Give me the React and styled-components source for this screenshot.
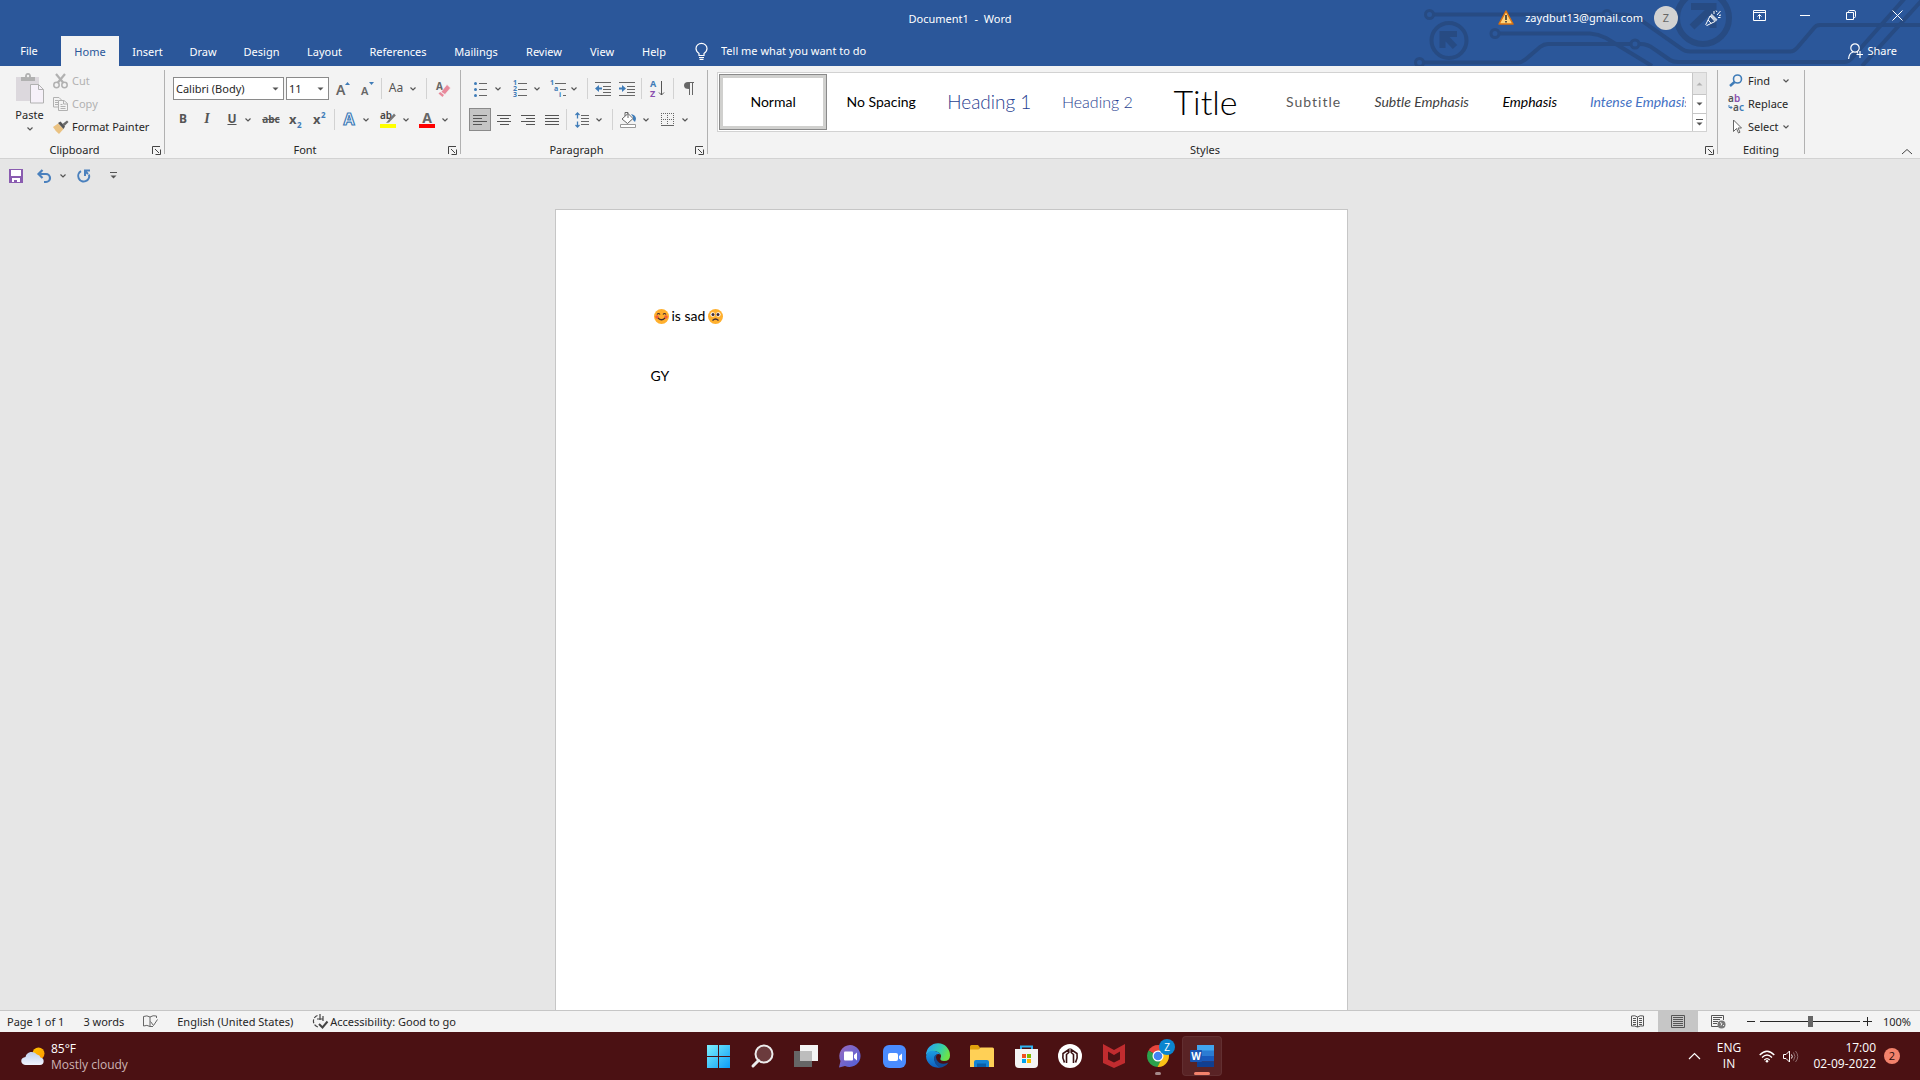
import React, { useState } from 'react';
import styled, { createGlobalStyle } from 'styled-components';

const GlobalStyle = createGlobalStyle`
  * {
    box-sizing: border-box;
  }
  body {
    margin: 0;
    font-family: "Noto Sans", "Open Sans", sans-serif;
    font-size: 11px;
    line-height: 16px;
    color: #262626;
  }
  button, input, select {
    font: inherit;
    color: inherit;
    margin: 0;
    padding: 0;
    border: 0;
    background: none;
  }
  svg {
    display: block;
    flex: none;
    overflow: visible;
  }
`

const Window = styled.div`
  display: flex;
  flex-direction: column;
  height: 100vh;
  background-color: #e6e6e6;
  overflow: hidden;
`

/* ---------- header ---------- */

const Header = styled.header`
  position: relative;
  flex: none;
  background-color: #2b579a;
  color: #fff;
`

const Circuit = styled.svg`
  position: absolute;
  top: 0;
  right: 0;
  overflow: hidden;
`

const TitleBar = styled.div`
  position: relative;
  display: grid;
  grid-template-columns: 1fr auto 1fr;
  height: 36px;
`

const DocTitle = styled.h1`
  grid-column: 2;
  margin: 0;
  padding-top: 11px;
  font-size: 11px;
  font-weight: 400;
  line-height: 16px;
  white-space: pre;
`

const Account = styled.div`
  display: flex;
  justify-content: flex-end;
`

const User = styled.button`
  display: flex;
  align-items: center;
  gap: 11px;
  height: 35px;
  margin-right: 12px;
`

const Avatar = styled.span`
  width: 24px;
  height: 24px;
  border-radius: 50%;
  background-color: #d2d2d2;
  color: #666;
  line-height: 24px;
  text-align: center;
`

const WindowButton = styled.button`
  display: flex;
  align-items: center;
  justify-content: center;
  width: 46px;
  height: ${({ $tall }) => ($tall ? '34px' : '30px')};
  &:hover {
    background-color: #3e6db5;
  }
`

const TabBar = styled.nav`
  position: relative;
  display: flex;
  align-items: center;
  height: 30px;
`

const Tab = styled.button`
  width: ${({ $w }) => $w}px;
  height: 30px;
  padding-top: ${({ $file }) => ($file ? 0 : 2)}px;
  padding-right: ${({ $file }) => ($file ? 3 : 0)}px;
  background-color: ${({ $active }) => ($active ? '#f3f3f3' : 'transparent')};
  color: ${({ $active }) => ($active ? '#2b579a' : '#fff')};
`

const TellMe = styled.label`
  display: flex;
  align-items: center;
  gap: 13px;
  margin-left: 15px;
  input {
    width: 200px;
    outline: none;
  }
  input::placeholder {
    color: #fff;
    opacity: 1;
  }
`

const Share = styled.button`
  display: flex;
  align-items: center;
  gap: 4px;
  margin-left: auto;
  margin-right: 23px;
`

/* ---------- ribbon ---------- */

const Ribbon = styled.section`
  display: flex;
  flex: none;
  height: 93px;
  background-color: #f3f3f3;
  border-bottom: 1px solid #d2d2d2;
`

const Divider = styled.div`
  width: 1px;
  margin: 4px 0;
  background-color: #b1b1b1;
`

const Group = styled.div`
  display: flex;
  flex-direction: column;
  flex: ${({ $w }) => ($w ? `0 0 ${$w}px` : '1 1 0')};
  min-width: 0;
`

const GroupBody = styled.div`
  flex: 1;
  display: flex;
  min-height: 0;
`

const GroupFooter = styled.div`
  display: flex;
  height: 16px;
  span {
    flex: 1;
    text-align: center;
  }
`

const Launcher = styled.button`
  display: flex;
  align-items: center;
  justify-content: center;
  width: 15px;
`

const PasteButton = styled.button`
  display: flex;
  flex-direction: column;
  align-items: center;
  gap: 3px;
  width: 53px;
  padding: 7px 0 0 6px;
`

const Stack = styled.div`
  display: flex;
  flex-direction: column;
  padding-top: 3px;
  padding-left: ${({ $left }) => $left || 0}px;
`

const StackButton = styled.button`
  display: grid;
  grid-template-columns: 16px minmax(31px, auto) auto;
  align-items: center;
  justify-content: start;
  gap: 3px;
  height: 23px;
  text-align: left;
  white-space: nowrap;
  color: ${({ disabled }) => (disabled ? '#b1b1b1' : '#262626')};
`

const ToolRows = styled.div`
  display: flex;
  flex-direction: column;
  gap: 8px;
  padding: 11px 0 0 ${({ $left }) => $left}px;
`

const ToolRow = styled.div`
  display: flex;
  align-items: center;
  height: 23px;
`

const Sep = styled.div`
  width: 1px;
  height: 21px;
  margin: 0 2px;
  background-color: #d2d2d2;
`

const Tool = styled.button`
  display: flex;
  align-items: center;
  justify-content: center;
  width: ${({ $w }) => $w}px;
  height: 23px;
  color: #555;
  &:hover {
    background-color: #d5d5d5;
  }
`

const ChevButton = styled(Tool)`
  justify-content: flex-start;
  padding-left: 1px;
`

const AlignGroup = styled.div`
  display: flex;
  gap: 2px;
  padding: 0 1px;
`

const AlignButton = styled(Tool)`
  width: 22px;
  border: 1px solid ${({ $on }) => ($on ? '#8a8a8a' : 'transparent')};
  background-color: ${({ $on }) => ($on ? '#c5c5c5' : 'transparent')};
`

const Combo = styled.div`
  display: grid;
  width: ${({ $w }) => $w}px;
  height: 23px;
  margin-right: ${({ $gap }) => $gap || 0}px;
  border: 1px solid #8a8a8a;
  background-color: #fff;
  align-items: center;
  select, svg {
    grid-area: 1 / 1;
  }
  select {
    appearance: none;
    width: 100%;
    height: 21px;
    padding-left: 2px;
    outline: none;
  }
  svg {
    justify-self: end;
    margin-right: 4px;
    pointer-events: none;
  }
`

const Glyph = styled.span`
  font-size: ${({ $size }) => $size || 14}px;
  line-height: 14px;
  padding-bottom: 2px;
  font-weight: ${({ $bold }) => ($bold ? 700 : 400)};
  font-style: ${({ $italic }) => ($italic ? 'italic' : 'normal')};
  font-family: ${({ $serif }) => ($serif ? '"Liberation Serif", serif' : 'inherit')};
  text-decoration: ${({ $line }) => $line || 'none'};
`

/* ---------- style gallery ---------- */

const Gallery = styled.div`
  flex: 1;
  display: flex;
  height: 60px;
  margin: 6px 10px 0 9px;
  border: 1px solid #d2d2d2;
  background-color: #fff;
  min-width: 0;
`

const GalleryItems = styled.div`
  flex: 1;
  display: flex;
  padding: 1px 0 1px 1px;
  min-width: 0;
`

const StyleCard = styled.button`
  flex: 1 1 0;
  min-width: 0;
  padding: 0 5px;
  border: 1px solid ${({ $on }) => ($on ? '#8a8a8a' : 'transparent')};
  box-shadow: ${({ $on }) => ($on ? 'inset 0 0 0 3px #d0d0ce' : 'none')};
  span {
    display: block;
    overflow: hidden;
    white-space: nowrap;
    text-align: center;
    font-family: Lato, "Open Sans", sans-serif;
    font-size: ${({ $size }) => $size || 14}px;
    font-weight: ${({ $light }) => ($light ? 300 : 400)};
    font-style: ${({ $italic }) => ($italic ? 'italic' : 'normal')};
    letter-spacing: ${({ $spaced }) => ($spaced ? '1px' : 'normal')};
    line-height: 44px;
    color: ${({ $color }) => $color || '#000'};
  }
`

const GalleryScroll = styled.div`
  display: grid;
  grid-template-rows: 21px 19px 18px;
  width: 14px;
  border-left: 1px solid #c6c6c6;
`

const ScrollButton = styled.button`
  display: flex;
  align-items: center;
  justify-content: center;
  background-color: ${({ disabled }) => (disabled ? '#e6e6e6' : '#fff')};
  & + & {
    border-top: 1px solid #c6c6c6;
  }
`

const RibbonEnd = styled.div`
  flex: 0 0 115px;
  display: flex;
  align-items: flex-end;
  justify-content: flex-end;
  padding: 0 7px 3px 0;
`

/* ---------- quick access and document ---------- */

const QuickAccess = styled.div`
  display: flex;
  align-items: center;
  flex: none;
  height: 33px;
  padding-left: 2px;
`

const Workspace = styled.main`
  flex: 1;
  min-height: 0;
  display: flex;
  justify-content: center;
  padding: 17px 18px 0 0;
  overflow: hidden;
`

const Page = styled.article`
  width: 793px;
  height: 1123px;
  padding: 96px 95px;
  border: 1px solid #c6c6c6;
  background-color: #fff;
  color: #000;
  font-family: Lato, "Open Sans", sans-serif;
  font-size: 14px;
  line-height: 20px;
`

const Line = styled.p`
  display: flex;
  align-items: center;
  gap: 3px;
  height: 20px;
  margin: 0 0 40px;
  padding-left: ${({ $indent }) => ($indent ? 3 : 0)}px;
`

/* ---------- status bar ---------- */

const StatusBar = styled.footer`
  display: flex;
  justify-content: space-between;
  flex: none;
  height: 22px;
  padding-left: 7px;
  border-top: 1px solid #c6c6c6;
  background-color: #f3f3f3;
`

const StatusGroup = styled.div`
  display: flex;
  gap: 19px;
`

const StatusItem = styled.button`
  display: flex;
  align-items: center;
  gap: 1px;
  white-space: nowrap;
`

const ViewGroup = styled.div`
  display: flex;
`

const ViewButton = styled.button`
  display: flex;
  align-items: center;
  justify-content: center;
  width: 40px;
  height: 21px;
  background-color: ${({ $on }) => ($on ? '#c6c6c6' : 'transparent')};
`

const ZoomArea = styled.div`
  display: flex;
  align-items: center;
  margin-left: 6px;
`

const ZoomButton = styled.button`
  display: flex;
  align-items: center;
  justify-content: center;
  width: 14px;
  height: 21px;
`

const ZoomSlider = styled.input`
  appearance: none;
  width: 100px;
  height: 11px;
  margin-left: 2px;
  outline: none;
  &::-webkit-slider-runnable-track {
    height: 1px;
    background-color: #262626;
  }
  &::-webkit-slider-thumb {
    appearance: none;
    width: 5px;
    height: 11px;
    margin-top: -5px;
    background-color: #666;
  }
`

const ZoomValue = styled.button`
  width: 46px;
  text-align: center;
`

/* ---------- taskbar ---------- */

const TaskBar = styled.div`
  display: grid;
  grid-template-columns: 1fr auto 1fr;
  align-items: center;
  flex: none;
  height: 48px;
  background-color: #4b1113;
  color: #fff;
  font-family: "Open Sans", "Noto Sans", sans-serif;
  font-size: 12px;
`

const Weather = styled.button`
  display: flex;
  align-items: center;
  gap: 6px;
  padding: 2px 0 0 21px;
  text-align: left;
  span {
    display: block;
  }
  span + span {
    color: #cdb4b5;
  }
`

const Apps = styled.div`
  display: flex;
  gap: 4px;
`

const AppButton = styled.button`
  display: grid;
  place-items: center;
  position: relative;
  width: 40px;
  height: 40px;
  border-radius: 4px;
  background-color: ${({ $active }) => ($active ? 'rgba(255, 255, 255, 0.08)' : 'transparent')};
  box-shadow: ${({ $active }) => ($active ? 'inset 0 0 0 1px rgba(255, 255, 255, 0.06)' : 'none')};
  &::after {
    content: "";
    position: absolute;
    bottom: 1px;
    height: 3px;
    border-radius: 2px;
    width: ${({ $active, $running }) => ($active ? 16 : $running ? 6 : 0)}px;
    background-color: ${({ $active }) => ($active ? '#f3826c' : '#a58889')};
  }
`

const ProfileBadge = styled.span`
  position: absolute;
  top: 3px;
  right: 3px;
  width: 16px;
  height: 16px;
  border-radius: 50%;
  background-color: #0b85cf;
  font-size: 10px;
  line-height: 16px;
`

const Tray = styled.div`
  display: flex;
  align-items: center;
  justify-content: flex-end;
  padding-right: 20px;
`

const TrayButton = styled.button`
  display: flex;
  align-items: center;
  justify-content: center;
  gap: 8px;
  width: ${({ $w }) => $w}px;
  height: 40px;
`

const Clock = styled.button`
  width: 70px;
  margin-right: 8px;
  text-align: right;
  white-space: nowrap;
`

const Notice = styled.button`
  width: 16px;
  height: 16px;
  border-radius: 50%;
  background-color: #f3826c;
  color: #2a0a0b;
  font-size: 11px;
  line-height: 16px;
`

/* ---------- icons ---------- */

const Chev = () => (
  <svg width="8" height="6" fill="none" stroke="#555" strokeWidth="1.2"><path d="M1.5 1.5 4 4l2.5-2.5" /></svg>
)

const Triangle = ({ up, bar, color = '#555' }) => (
  <svg width="7" height="8" fill={color}>
    {bar && <path d="M0 0h7v1H0z" />}
    <path d={up ? 'M.5 5.5h6l-3-3z' : bar ? 'M.5 3.5h6l-3 3z' : 'M.5 2.5h6l-3 3z'} />
  </svg>
)

const LauncherIcon = () => (
  <svg width="9" height="9" fill="none" stroke="#444"><path d="M.5 8V.5H8M3 3l4 4M8.5 3.5v5h-5" /></svg>
)

const CircuitArt = () => (
  <Circuit width="520" height="66" viewBox="0 0 520 66" fill="none" stroke="#274b83" strokeWidth="4" aria-hidden="true">
    <path d="M34 14.500H202M212 14.500H224Q234 15 242 21L282 49Q285 51.500 290 51.500H390Q394 51.500 397 48L414 28Q416 25 420 25H520" />
    <path d="M100 33.500H190Q198 34 206 38L252 66M24 62.500H118Q122 62.500 126 59L140 47Q144 44 148 44H230M240 44Q248 44 254 49L270 60Q273 62 278 62H444Q449 62 452 58L505 -2M462 66 524 -2" />
    <g strokeWidth="3"><circle cx="29.5" cy="14.5" r="4" /><circle cx="207" cy="14.5" r="4" /><circle cx="95" cy="33.5" r="4" /><circle cx="235" cy="44" r="4" /><circle cx="19.5" cy="62.5" r="4" /></g>
    <circle cx="49" cy="40.5" r="17.5" />
    <path d="M42.500 48V34H57M43 34.500 55 47" strokeWidth="6" />
    <circle cx="303" cy="18" r="26" strokeWidth="6" />
    <path d="M291 6.500H313V28M312 8 292 27" strokeWidth="7" />
  </Circuit>
)

const WarningIcon = () => (
  <svg width="16" height="15" viewBox="0 0 16 15"><path d="M8 1 15 14H1z" fill="#ffd37a" stroke="#d9710f" strokeWidth="1.5" strokeLinejoin="round" /><path d="M7.200 5h1.600v5H7.200zM7.200 11h1.600v1.600H7.200z" fill="#333" /></svg>
)

const PartyIcon = () => (
  <svg width="17" height="17" fill="none" stroke="#fff"><path d="M5 7 .8 15.500 1.800 16.500 10 12.500zM3.200 11l3 3.500" /><path d="M6.500 4.500 12.500 10.500 11 12.500 5 7z" fill="#fff" stroke="none" opacity=".75" /><path d="M9 5V2M11 1.500l1 1.500M12 6l3.500-4M14 6.500l2-.5M13 8.500h2.500" /></svg>
)

const RibbonDisplayIcon = () => (
  <svg width="13" height="11" fill="none" stroke="#fff"><path d="M.5.5h12v10H.5zM.5 2.500h12M6.500 9V4.500M4.500 6.500l2-2 2 2" /></svg>
)

const MinimizeIcon = () => <svg width="10" height="1"><path d="M0 0h10v1H0z" fill="#fff" /></svg>

const RestoreIcon = () => (
  <svg width="10" height="10" fill="none" stroke="#fff"><path d="M.5 2.500h7v7h-7zM2.500 2V1.500q0-1 1-1H8Q9.500.5 9.500 2V6.500q0 1-1 1H8" /></svg>
)

const CloseIcon = () => <svg width="11" height="11" stroke="#fff"><path d="M.5.5l10 10M10.500.5l-10 10" /></svg>

const BulbIcon = () => (
  <svg width="13" height="17" fill="none" stroke="#fff" strokeWidth="1.2"><path d="M4 12.500V10.500Q1 8.500 1 5.500A5.300 5 0 0 1 12 5.500Q12 8.500 9 10.500V12.500zM4 14.500h5M4.500 16.300h4" /></svg>
)

const ShareIcon = () => (
  <svg width="15" height="16" fill="none" stroke="#fff" strokeWidth="1.2"><circle cx="7" cy="5" r="4.2" /><path d="M.6 16Q1 10 5 9M9 9l1 1.500M12 8v7M8.500 11.500h6.500" /></svg>
)

const PasteIcon = () => (
  <svg width="29" height="31"><path d="M1 4h23v24H1z" fill="#dcd8dd" /><path d="M6 4h4q0-4 3-4t3 4h4v4H6z" fill="#b1b1b1" /><circle cx="13" cy="3" r="1.2" fill="#f3f3f3" /><path d="M15.500 11.500h8l5 5v13.500h-13z" fill="#f6f1f9" stroke="#b1b1b1" /><path d="M23.500 11.500v5h5" fill="none" stroke="#b1b1b1" /></svg>
)

const CutIcon = () => (
  <svg width="15" height="16" fill="none" stroke="#b1b1b1" strokeWidth="1.5"><circle cx="3.5" cy="12" r="2.7" /><circle cx="11.5" cy="12" r="2.7" /><path d="M3 1l7.500 9M12 1 4.500 10" strokeWidth="2.2" /></svg>
)

const CopyIcon = () => (
  <svg width="15" height="14" fill="#f3f3f3" stroke="#b1b1b1"><path d="M.5.5H6L8.500 3v7H.5zM2 3.500h3M2 5.500h3M2 7.500h3" /><path d="M5.500 3.500H11l3.500 3V13.500h-9zM10.500 3.500v3.500h4M7.500 7.500h2M7.500 9.500h5M7.500 11.500h5" /></svg>
)

const PainterIcon = () => (
  <svg width="16" height="14"><path d="M0 7 5 3.500 10.500 9 6 14Q3 12 0 7z" fill="#eac282" /><path d="M5 3 7.500 1.500 12 6.500 10.500 9z" fill="#555" /><path d="M9.500 4 14 .5 15.500 2 11.500 6z" fill="#6a6a6a" /></svg>
)

const SizeIcon = ({ down }) => (
  <svg width="14" height="16">
    <text x="0" y="14" fontSize={down ? 11 : 14} fontWeight="600" fill="#666">A</text>
    <path d={down ? 'M8 1h5l-2.500 3z' : 'M9 4h5l-2.500-3z'} fill="#3f7cb8" />
  </svg>
)

const EraserIcon = () => (
  <svg width="15" height="16"><text x="0" y="9" fontSize="10" fontWeight="700" fill="#666">A</text><path d="M5 11 11 3.500 14.500 7 9 13.500z" fill="#e8899b" stroke="#f3f3f3" strokeWidth=".6" /><path d="M2.500 12.500 4.200 11 8 14 6.500 16z" fill="#e8899b" /></svg>
)

const OutlineAIcon = () => (
  <svg width="18" height="20"><text x="9" y="15" textAnchor="middle" fontSize="16" fontWeight="700" fill="#fff" stroke="#3f7cb8" strokeWidth="1.2">A</text></svg>
)

const HighlightIcon = () => (
  <svg width="16" height="17"><text x="0" y="8" fontSize="10" fontWeight="600" fill="#444">ab</text><path d="M6 12 14 2.500 15.800 4.500 9 11.500z" fill="#777" /><path d="M0 13h16v4H0z" fill="#ff0" /></svg>
)

const FontColorIcon = () => (
  <svg width="16" height="17"><text x="8" y="12" textAnchor="middle" fontSize="14" fontWeight="700" fill="#666">A</text><path d="M0 13h16v4H0z" fill="#f00" /></svg>
)

const ScriptIcon = ({ raised }) => (
  <svg width="13" height="16"><text x="0" y="12" fontSize="13" fontWeight="700" fill="#555">x</text><text x="8" y={raised ? 6 : 16} fontSize="8" fontWeight="700" fill="#3f7cb8">2</text></svg>
)

const BulletsIcon = () => (
  <svg width="14" height="16"><path d="M5 2h8v1H5zM5 8h8v1H5zM5 14h8v1H5z" fill="#666" /><g fill="#3f7cb8"><circle cx="1.5" cy="2.5" r="1.5" /><circle cx="1.5" cy="8.5" r="1.5" /><circle cx="1.5" cy="14.5" r="1.5" /></g></svg>
)

const NumbersIcon = () => (
  <svg width="15" height="18"><path d="M5 3h9v1H5zM5 9h9v1H5zM5 15h9v1H5z" fill="#666" /><g fill="#3f7cb8" fontSize="7" fontWeight="700"><text x="0" y="5">1</text><text x="0" y="11">2</text><text x="0" y="17">3</text></g></svg>
)

const MultiIcon = () => (
  <svg width="17" height="18"><path d="M5 3h11v1H5zM10 9h6v1h-6zM13 15h3v1h-3z" fill="#666" /><g fill="#3f7cb8" fontSize="7" fontWeight="700"><text x="0" y="5">1</text><text x="4" y="11">a</text><text x="9" y="17">i</text></g></svg>
)

const IndentIcon = ({ left }) => (
  <svg width="16" height="14"><path d="M0 0h16v1H0zM8 4h8v1H8zM8 7h8v1H8zM8 10h8v1H8zM0 13h16v1H0z" fill="#666" /><path d={left ? 'M0 6.500 4 3v2.500h3v2H4V10z' : 'M7 6.500 3 3v2.500H0v2h3V10z'} fill="#3f7cb8" /></svg>
)

const SortIcon = () => (
  <svg width="15" height="17"><text x="0" y="7" fontSize="9" fontWeight="700" fill="#3f7cb8">A</text><text x="0" y="17" fontSize="9" fontWeight="700" fill="#8a4fae">Z</text><path d="M11.500 1v14M9 12.500l2.500 2.500 2.500-2.500" fill="none" stroke="#555" /></svg>
)

const PilcrowIcon = () => (
  <svg width="10" height="13"><path d="M10 0v1H9v12H8V1H6v12H5V7Q0 7 0 3.500 0 0 4 0z" fill="#666" /></svg>
)

const alignPaths = {
  left: 'M0 0h14v1H0zM0 3h9v1H0zM0 6h14v1H0zM0 9h9v1H0z',
  center: 'M0 0h14v1H0zM3 3h9v1H3zM0 6h14v1H0zM3 9h9v1H3z',
  right: 'M0 0h14v1H0zM5 3h9v1H5zM0 6h14v1H0zM5 9h9v1H5z',
  justify: 'M0 0h14v1H0zM0 3h14v1H0zM0 6h14v1H0zM0 9h14v1H0z',
}

const AlignIcon = ({ kind }) => <svg width="14" height="10"><path d={alignPaths[kind]} fill="#555" /></svg>

const SpacingIcon = () => (
  <svg width="14" height="16"><path d="M6 3h8v1H6zM6 6h8v1H6zM6 9h8v1H6zM6 12h8v1H6z" fill="#666" /><path d="M2.500 1v5.500M.5 3l2-2 2 2M2.500 9.500V15M.5 13l2 2 2-2" fill="none" stroke="#3f7cb8" strokeWidth="1.3" /></svg>
)

const BucketIcon = () => (
  <svg width="17" height="17"><path d="M2 8 8 2.500l5 5L7.500 12.500z" fill="#fff" stroke="#666" /><path d="M5 5V1.500h3V7" fill="none" stroke="#666" /><path d="M11 3q5 1 5 5l-1 3-2-2V6z" fill="#3f7cb8" /><path d="M.5 13.500h15v3H.5z" fill="#fff" stroke="#999" /></svg>
)

const BordersIcon = () => (
  <svg width="13" height="13" fill="none" stroke="#666"><path d="M.5 0v12M6.500 0v12M12.500 0v12M0 .5h13M0 6.500h13" strokeDasharray="1 1" /><path d="M0 12.500h13" /></svg>
)

const FindIcon = () => (
  <svg width="14" height="13" fill="none" stroke="#3f7cb8"><circle cx="8.5" cy="5" r="4" strokeWidth="1.6" /><path d="M5.500 8 1 12" strokeWidth="2.4" /></svg>
)

const ReplaceIcon = () => (
  <svg width="17" height="17" fontSize="10" fontWeight="600"><text x="-1" y="7" fill="#555">a</text><text x="5" y="7" fill="#8a4fae">b</text><text x="4" y="16" fill="#555">a</text><text x="10" y="16" fill="#3f7cb8">c</text><path d="M0 10v2.500h3M1.500 11 3 12.500 1.500 14" fill="none" stroke="#3f7cb8" /></svg>
)

const PointerIcon = () => (
  <svg width="14" height="15" fill="#fff" stroke="#666"><path d="M4.500 1v11.500l3-3 2 4.500 1.500-.8-2-4.200h3.500z" /></svg>
)

const SaveIcon = () => (
  <svg width="14" height="14"><path d="M0 0h14v14H0z" fill="#8a5cb0" /><path d="M2 1h10v6H2zM3 9h8v4H3z" fill="#fff" /><path d="M5 11h3v3H5z" fill="#8a5cb0" /></svg>
)

const UndoIcon = () => (
  <svg width="15" height="14" fill="none" stroke="#4a80bd" strokeWidth="2.2"><path d="M1.500 5H9a4 4 0 0 1 0 8H7M5.500 1 1.500 5l4 4" /></svg>
)

const RedoIcon = () => (
  <svg width="14" height="14" fill="none" stroke="#4a80bd" strokeWidth="2"><path d="M4 2.200A5.500 5.500 0 1 0 12 5.500M8 7V1.500H13M8 2l3 3" /></svg>
)

const HappyFace = () => (
  <svg width="15" height="15" role="img" aria-label="smiling face"><circle cx="7.5" cy="7.5" r="7.5" fill="#ffb02e" /><circle cx="3" cy="8" r="1.8" fill="#f4603a" /><circle cx="12" cy="8" r="1.8" fill="#f4603a" /><path d="M3 5.500Q4.500 3.500 6 5.500M9 5.500Q10.500 3.500 12 5.500M4 9q3.500 3.500 7 0" fill="none" stroke="#402a32" strokeWidth="1.2" /></svg>
)

const SadFace = () => (
  <svg width="15" height="15" role="img" aria-label="sad face"><circle cx="7.5" cy="7.5" r="7.5" fill="#ffb02e" /><circle cx="4.7" cy="5.5" r="2.3" fill="#fff" /><circle cx="10.3" cy="5.5" r="2.3" fill="#fff" /><circle cx="5" cy="5.5" r="1.5" fill="#402a32" /><circle cx="10" cy="5.5" r="1.5" fill="#402a32" /><path d="M4.500 11.500q3-3 6 0" fill="none" stroke="#402a32" strokeWidth="1.2" /></svg>
)

const ProofIcon = () => (
  <svg width="15" height="13" fill="none" stroke="#666"><path d="M7 11.500Q4 9.500.5 11V1.500Q4 0 7 2zM7 2Q10 0 13.500 1v2M7 11.500h3M7.500 6.500l3 4 4-6" /></svg>
)

const AccessIcon = () => (
  <svg width="17" height="15" fill="none" stroke="#444" strokeWidth="1.2"><path d="M5.500 1.500A6 6 0 0 0 6 13" strokeDasharray="4 1.5" /><path d="M8 0v6M5 5h6M11 2v5" /><path d="M7 10l3.500 3.500 5-6" strokeWidth="2" /></svg>
)

const ReadIcon = () => (
  <svg width="14" height="13" fill="none" stroke="#555"><path d="M6.500 12V2Q4 0 .5 1v10q3-.5 6 1 3-1.500 6-1V1Q9 0 6.500 2M2 3.500h3M2 5.500h3M2 7.500h3M8 3.500h3M8 5.500h3M8 7.500h3M2 9.500h3M8 9.500h3" /></svg>
)

const PrintIcon = () => (
  <svg width="14" height="13" fill="none" stroke="#555"><path d="M.5.5h13v12H.5zM2 2.500h10M2 4.500h10M2 6.500h10M2 8.500h10M2 10.500h10" /></svg>
)

const WebIcon = () => (
  <svg width="15" height="14" fill="none" stroke="#555"><path d="M7 11.500H.5V.5h12V5M2 2.500h9M2 4.500h7M2 6.500h5M2 8.500h4" /><circle cx="10.5" cy="9.5" r="4" fill="#777" stroke="none" /><path d="M9 7.500l2 1-1 2M12 10l1 1" stroke="#eee" /></svg>
)

const CloudIcon = () => (
  <svg width="24" height="20">
    <defs>
      <linearGradient id="cloud" x1="0" y1="0" x2="0" y2="1"><stop offset="0" stopColor="#bfd0ee" /><stop offset="1" stopColor="#f2f6ff" /></linearGradient>
      <linearGradient id="sun" x1="0" y1="0" x2="1" y2="1"><stop offset="0" stopColor="#ffc400" /><stop offset="1" stopColor="#ff9500" /></linearGradient>
    </defs>
    <circle cx="17.5" cy="6.5" r="6" fill="url(#sun)" />
    <path d="M5 18a4.500 4 0 0 1-.5-8A6.500 6.500 0 0 1 16 7.500q3 .5 3.500 3a4 3.800 0 0 1-.5 7.500z" fill="url(#cloud)" />
  </svg>
)

const StartIcon = () => (
  <svg width="23" height="23">
    <defs><linearGradient id="win" x1="0" y1="0" x2="1" y2="1"><stop offset="0" stopColor="#7cf0fd" /><stop offset="1" stopColor="#0c9cf5" /></linearGradient></defs>
    <path d="M0 0h11v11H0zM12 0h11v11H12zM0 12h11v11H0zM12 12h11v11H12z" fill="url(#win)" />
  </svg>
)

const SearchIcon = () => (
  <svg width="23" height="24" fill="none" stroke="#ececec" strokeLinecap="round"><circle cx="13" cy="10" r="8.5" strokeWidth="2" fill="rgba(255,255,255,.18)" /><path d="M7.500 16.500 2 22" strokeWidth="3" /></svg>
)

const TaskViewIcon = () => (
  <svg width="24" height="22"><path d="M0 6h18v16H0z" fill="#666" /><path d="M6 0h18v16H6z" fill="#f4f4f4" /><path d="M6 6h12v10H6z" fill="#bdbdbd" /></svg>
)

const ChatIcon = () => (
  <svg width="24" height="24">
    <defs><linearGradient id="chat" x1="0" y1="0" x2="1" y2="1"><stop offset="0" stopColor="#9a6bc0" /><stop offset="1" stopColor="#4c5fd8" /></linearGradient></defs>
    <path d="M12 1a11 11 0 1 1-5 21L1 23.500 2.500 17A11 11 0 0 1 12 1z" fill="url(#chat)" />
    <rect x="6" y="7.5" width="9" height="9" rx="1" fill="#fff" /><path d="M16 11l3-2.500v8L16 14z" fill="#fff" />
  </svg>
)

const ZoomIcon = () => (
  <svg width="23" height="23"><rect width="23" height="23" rx="6" fill="#4a8cff" /><rect x="5" y="8" width="10" height="8" rx="2" fill="#fff" /><path d="M16 11l3-2.500v7.500L16 13.500z" fill="#fff" /></svg>
)

const EdgeIcon = () => (
  <svg width="24" height="24">
    <defs>
      <linearGradient id="edgeA" x1="0" y1="0" x2="1" y2=".4"><stop offset=".2" stopColor="#2ba9e6" /><stop offset=".65" stopColor="#35cfa8" /><stop offset="1" stopColor="#6be24a" /></linearGradient>
      <linearGradient id="edgeB" x1="0" y1="0" x2="0" y2="1"><stop offset="0" stopColor="#1b9de2" /><stop offset="1" stopColor="#0f5fc0" /></linearGradient>
    </defs>
    <path d="M0 11A12 12 0 0 1 24 11.500Q24 17 18 17 13.500 17 14.500 14 16 11.500 13.500 9 7 4 0 11z" fill="url(#edgeA)" />
    <path d="M0 12Q2 6 8.500 7 13 7.500 14.500 10.500 10 9 8.500 13 7.500 19 14 23.500A12 12 0 0 1 0 12z" fill="url(#edgeB)" />
    <path d="M8.500 12Q7 19.500 13.500 23.800 19.500 23 22.500 18.500 14 22 10.500 15.500 9.500 12 11 10.500 9 11 8.500 12z" fill="#124d96" />
  </svg>
)

const ExplorerIcon = () => (
  <svg width="24" height="22"><path d="M0 1.500Q0 0 1.500 0H8l2 2.500L8 5H0z" fill="#e2a10d" /><path d="M0 4.500h8l2.500-2H22.500q1.500 0 1.500 1.500V22H0z" fill="#ffd056" /><path d="M4 17q0-2 2-2h11q2 0 2 2v5H4z" fill="#1583d4" /><path d="M7 18.500h9v3.500H7z" fill="#0a5fa8" /></svg>
)

const StoreIcon = () => (
  <svg width="23" height="23"><path d="M6 5V1.500h11V5" fill="none" stroke="#2fb4f2" strokeWidth="2" /><path d="M0 4h23v15q0 4-4 4H4q-4 0-4-4z" fill="#f4f4f4" /><path d="M7 9h4v4H7z" fill="#f25022" /><path d="M12 9h4v4h-4z" fill="#7fba00" /><path d="M7 14h4v4H7z" fill="#00a4ef" /><path d="M12 14h4v4h-4z" fill="#ffb900" /></svg>
)

const LoopIcon = () => (
  <svg width="24" height="24" fill="none" stroke="#3a1113" strokeWidth="1.6"><circle cx="12" cy="12" r="12" fill="#fff" stroke="none" /><path d="M6.500 18.500Q4 14 5 9.500L10.800 5.500V8.500L8.500 10.500V19M17.500 18.500Q20 14 19 9.500L13.200 5.500V8.500L15.500 10.500V19" /></svg>
)

const ShieldIcon = () => (
  <svg width="22" height="24"><path d="M0 0 11 6 22 0V19L11 24 0 19zM5 7.500V15.500L11 18.500 17 15.500V7.500L11 11z" fillRule="evenodd" fill="#c12c2f" /></svg>
)

const ChromeIcon = () => (
  <svg width="22" height="22"><path d="M11 11 1.500 5.500A11 11 0 0 1 20.500 5.500z" fill="#e8453c" /><path d="M11 11 1.500 5.500A11 11 0 0 0 10.500 22l5-8z" fill="#2ba24c" /><path d="M11 11h5l-5.500 11A11 11 0 0 0 20.500 5.500H11z" fill="#fbc116" /><circle cx="11" cy="11" r="5.5" fill="#fff" /><circle cx="11" cy="11" r="4.3" fill="#4285f4" /></svg>
)

const WordIcon = () => (
  <svg width="24" height="22"><path d="M7 0h17v6H7z" fill="#41a5ee" /><path d="M7 5.500h17V11H7z" fill="#2b7cd3" /><path d="M7 11h17v5.500H7z" fill="#185abd" /><path d="M7 16.500h17V22H7z" fill="#103f91" /><rect y="5" width="12" height="12" rx="1" fill="#1a56b4" /><text x="6" y="15" textAnchor="middle" fontSize="10" fontWeight="700" fill="#fff">W</text></svg>
)

const TrayChevron = () => <svg width="13" height="8" fill="none" stroke="#fff" strokeWidth="1.2"><path d="M1 7l5.500-5.500L12 7" /></svg>

const WifiIcon = () => (
  <svg width="16" height="13" fill="none" stroke="#fff" strokeWidth="1.3"><path d="M.7 5Q8-2.500 15.300 5M3 7.500q5-5 10 0M5.300 10q2.700-2.700 5.400 0" /><circle cx="8" cy="11.3" r="1.3" fill="#fff" stroke="none" /></svg>
)

const SpeakerIcon = () => (
  <svg width="16" height="13" fill="none" stroke="#fff"><path d="M.5 4.500h2.500L6.500 1v11L3 8.500H.5zM8.500 4.500q1.500 2 0 4" /><path d="M10.500 2.500q3 4 0 8M12.500 1q4.500 5.500 0 11" stroke="#8d6a6b" /></svg>
)

/* ---------- data ---------- */

const tabs = [
  { name: 'Home', w: 58 },
  { name: 'Insert', w: 57 },
  { name: 'Draw', w: 54 },
  { name: 'Design', w: 63 },
  { name: 'Layout', w: 63 },
  { name: 'References', w: 84 },
  { name: 'Mailings', w: 72 },
  { name: 'Review', w: 64 },
  { name: 'View', w: 52 },
  { name: 'Help', w: 52 },
]

const styles = [
  { name: 'Normal' },
  { name: 'No Spacing' },
  { name: 'Heading 1', size: 19, light: true, color: '#1f4090' },
  { name: 'Heading 2', size: 16, light: true, color: '#1f4090' },
  { name: 'Title', size: 34, light: true },
  { name: 'Subtitle', color: '#5a5a5a', spaced: true },
  { name: 'Subtle Emphasis', color: '#404040', italic: true },
  { name: 'Emphasis', italic: true },
  { name: 'Intense Emphasis', color: '#4472c4', italic: true },
]

const apps = [
  { name: 'Start', icon: <StartIcon /> },
  { name: 'Search', icon: <SearchIcon /> },
  { name: 'Task view', icon: <TaskViewIcon /> },
  { name: 'Chat', icon: <ChatIcon /> },
  { name: 'Zoom', icon: <ZoomIcon /> },
  { name: 'Edge', icon: <EdgeIcon /> },
  { name: 'File Explorer', icon: <ExplorerIcon /> },
  { name: 'Store', icon: <StoreIcon /> },
  { name: 'Assistant', icon: <LoopIcon /> },
  { name: 'Antivirus', icon: <ShieldIcon /> },
  { name: 'Chrome', icon: <ChromeIcon />, running: true, badge: 'Z' },
  { name: 'Word', icon: <WordIcon />, active: true },
]

const RibbonGroup = ({ label, width, launcher = true, children }) => (
  <>
    <Group $w={width}>
      <GroupBody>{children}</GroupBody>
      <GroupFooter>
        <span>{label}</span>
        {launcher && <Launcher aria-label={`${label} settings`}><LauncherIcon /></Launcher>}
      </GroupFooter>
    </Group>
    <Divider />
  </>
)

const More = ({ w, label }) => (
  <ChevButton $w={w} aria-label={`${label} options`}><Chev /></ChevButton>
)

function App() {
  const [tab, setTab] = useState('Home');
  const [align, setAlign] = useState('left');
  const [style, setStyle] = useState('Normal');
  const [zoom, setZoom] = useState(100);

  return (
    <Window>
      <GlobalStyle />
      <Header>
        <CircuitArt />
        <TitleBar>
          <DocTitle>{'Document1  -  Word'}</DocTitle>
          <Account>
            <User>
              <WarningIcon />
              <span>zaydbut13@gmail.com</span>
              <Avatar>Z</Avatar>
            </User>
            <WindowButton $tall aria-label="What's new"><PartyIcon /></WindowButton>
            <WindowButton aria-label="Ribbon display options"><RibbonDisplayIcon /></WindowButton>
            <WindowButton aria-label="Minimize"><MinimizeIcon /></WindowButton>
            <WindowButton aria-label="Restore"><RestoreIcon /></WindowButton>
            <WindowButton aria-label="Close"><CloseIcon /></WindowButton>
          </Account>
        </TitleBar>
        <TabBar>
          <Tab $w={61} $file>File</Tab>
          {tabs.map((item) => (
            <Tab key={item.name} $w={item.w} $active={item.name === tab} onClick={() => setTab(item.name)}>
              {item.name}
            </Tab>
          ))}
          <TellMe>
            <BulbIcon />
            <input aria-label="Tell me what you want to do" placeholder="Tell me what you want to do" />
          </TellMe>
          <Share><ShareIcon />Share</Share>
        </TabBar>
      </Header>

      <Ribbon>
        <RibbonGroup label="Clipboard" width={164}>
          <PasteButton><PasteIcon />Paste<Chev /></PasteButton>
          <Stack>
            <StackButton disabled><CutIcon />Cut</StackButton>
            <StackButton disabled><CopyIcon />Copy</StackButton>
            <StackButton><PainterIcon />Format Painter</StackButton>
          </Stack>
        </RibbonGroup>

        <RibbonGroup label="Font" width={295}>
          <ToolRows $left={8}>
            <ToolRow>
              <Combo $w={111} $gap={2}>
                <select aria-label="Font" defaultValue="Calibri (Body)"><option>Calibri (Body)</option></select>
                <Triangle />
              </Combo>
              <Combo $w={43}>
                <select aria-label="Font size" defaultValue="11"><option>11</option></select>
                <Triangle />
              </Combo>
              <Tool $w={28} aria-label="Grow font"><SizeIcon /></Tool>
              <Tool $w={22} aria-label="Shrink font"><SizeIcon down /></Tool>
              <Sep />
              <Tool $w={24} aria-label="Change case"><Glyph $size={12}>Aa</Glyph></Tool>
              <More w={16} label="Change case" />
              <Sep />
              <Tool $w={28} aria-label="Clear formatting"><EraserIcon /></Tool>
            </ToolRow>
            <ToolRow>
              <Tool $w={20} aria-label="Bold"><Glyph $size={12} $bold>B</Glyph></Tool>
              <Tool $w={28} aria-label="Italic"><Glyph $italic $bold $serif>I</Glyph></Tool>
              <Tool $w={22} aria-label="Underline"><Glyph $size={12} $bold $line="underline">U</Glyph></Tool>
              <More w={15} label="Underline" />
              <Tool $w={26} aria-label="Strikethrough"><Glyph $size={10} $bold $line="line-through">abc</Glyph></Tool>
              <Tool $w={22} aria-label="Subscript"><ScriptIcon /></Tool>
              <Tool $w={26} aria-label="Superscript"><ScriptIcon raised /></Tool>
              <Sep />
              <Tool $w={24} aria-label="Text effects"><OutlineAIcon /></Tool>
              <More w={13} label="Text effects" />
              <Tool $w={27} aria-label="Highlight"><HighlightIcon /></Tool>
              <More w={13} label="Highlight" />
              <Tool $w={26} aria-label="Font color"><FontColorIcon /></Tool>
              <More w={10} label="Font color" />
            </ToolRow>
          </ToolRows>
        </RibbonGroup>

        <RibbonGroup label="Paragraph" width={246}>
          <ToolRows $left={7}>
            <ToolRow>
              <Tool $w={25} aria-label="Bullets"><BulletsIcon /></Tool>
              <More w={15} label="Bullets" />
              <Tool $w={24} aria-label="Numbering"><NumbersIcon /></Tool>
              <More w={16} label="Numbering" />
              <Tool $w={21} aria-label="Multilevel list"><MultiIcon /></Tool>
              <More w={16} label="Multilevel list" />
              <Sep />
              <Tool $w={25} aria-label="Decrease indent"><IndentIcon left /></Tool>
              <Tool $w={24} aria-label="Increase indent"><IndentIcon /></Tool>
              <Sep />
              <Tool $w={27} aria-label="Sort"><SortIcon /></Tool>
              <Sep />
              <Tool $w={26} aria-label="Show marks"><PilcrowIcon /></Tool>
            </ToolRow>
            <ToolRow>
              <AlignGroup>
                {Object.keys(alignPaths).map((kind) => (
                  <AlignButton key={kind} $on={kind === align} aria-label={`Align ${kind}`} onClick={() => setAlign(kind)}>
                    <AlignIcon kind={kind} />
                  </AlignButton>
                ))}
              </AlignGroup>
              <Sep />
              <Tool $w={25} aria-label="Line spacing"><SpacingIcon /></Tool>
              <More w={16} label="Line spacing" />
              <Sep />
              <Tool $w={26} aria-label="Shading"><BucketIcon /></Tool>
              <More w={13} label="Shading" />
              <Tool $w={26} aria-label="Borders"><BordersIcon /></Tool>
              <More w={13} label="Borders" />
            </ToolRow>
          </ToolRows>
        </RibbonGroup>

        <RibbonGroup label="Styles">
          <Gallery>
            <GalleryItems>
              {styles.map((item) => (
                <StyleCard
                  key={item.name}
                  $on={item.name === style}
                  $size={item.size}
                  $light={item.light}
                  $italic={item.italic}
                  $spaced={item.spaced}
                  $color={item.color}
                  onClick={() => setStyle(item.name)}
                >
                  <span>{item.name}</span>
                </StyleCard>
              ))}
            </GalleryItems>
            <GalleryScroll>
              <ScrollButton disabled aria-label="Scroll up"><Triangle up color="#b1b1b1" /></ScrollButton>
              <ScrollButton aria-label="Scroll down"><Triangle /></ScrollButton>
              <ScrollButton aria-label="More styles"><Triangle bar /></ScrollButton>
            </GalleryScroll>
          </Gallery>
        </RibbonGroup>

        <RibbonGroup label="Editing" width={86} launcher={false}>
          <Stack $left={11}>
            <StackButton><FindIcon />Find<Chev /></StackButton>
            <StackButton><ReplaceIcon />Replace</StackButton>
            <StackButton><PointerIcon />Select<Chev /></StackButton>
          </Stack>
        </RibbonGroup>

        <RibbonEnd>
          <button aria-label="Collapse ribbon">
            <svg width="12" height="7" fill="none" stroke="#444"><path d="M1 6l5-4.500L11 6" /></svg>
          </button>
        </RibbonEnd>
      </Ribbon>

      <QuickAccess>
        <Tool $w={28} aria-label="Save"><SaveIcon /></Tool>
        <Tool $w={28} aria-label="Undo"><UndoIcon /></Tool>
        <More w={12} label="Undo" />
        <Tool $w={28} aria-label="Redo"><RedoIcon /></Tool>
        <Tool $w={30} aria-label="Customize toolbar"><Triangle bar /></Tool>
      </QuickAccess>

      <Workspace>
        <Page>
          <Line $indent><HappyFace />is sad<SadFace /></Line>
          <Line>GY</Line>
        </Page>
      </Workspace>

      <StatusBar>
        <StatusGroup>
          <StatusItem>Page 1 of 1</StatusItem>
          <StatusItem>3 words</StatusItem>
          <StatusItem aria-label="Proofing"><ProofIcon /></StatusItem>
          <StatusItem>English (United States)</StatusItem>
          <StatusItem><AccessIcon />Accessibility: Good to go</StatusItem>
        </StatusGroup>
        <ViewGroup>
          <ViewButton aria-label="Read mode"><ReadIcon /></ViewButton>
          <ViewButton $on aria-label="Print layout"><PrintIcon /></ViewButton>
          <ViewButton aria-label="Web layout"><WebIcon /></ViewButton>
          <ZoomArea>
            <ZoomButton aria-label="Zoom out" onClick={() => setZoom(zoom - 10)}><svg width="8" height="1"><path d="M0 0h8v1H0z" fill="#262626" /></svg></ZoomButton>
            <ZoomSlider type="range" aria-label="Zoom" min="0" max="200" value={zoom} onChange={(e) => setZoom(Number(e.target.value))} />
            <ZoomButton aria-label="Zoom in" onClick={() => setZoom(zoom + 10)}><svg width="9" height="9"><path d="M0 4h9v1H0zM4 0h1v9H4z" fill="#262626" /></svg></ZoomButton>
            <ZoomValue>{zoom}%</ZoomValue>
          </ZoomArea>
        </ViewGroup>
      </StatusBar>

      <TaskBar>
        <Weather>
          <CloudIcon />
          <div><span>85°F</span><span>Mostly cloudy</span></div>
        </Weather>
        <Apps>
          {apps.map((item) => (
            <AppButton key={item.name} aria-label={item.name} $active={item.active} $running={item.running}>
              {item.icon}
              {item.badge && <ProfileBadge>{item.badge}</ProfileBadge>}
            </AppButton>
          ))}
        </Apps>
        <Tray>
          <TrayButton $w={24} aria-label="Hidden icons"><TrayChevron /></TrayButton>
          <TrayButton $w={46}>ENG<br />IN</TrayButton>
          <TrayButton $w={54} aria-label="Network and sound"><WifiIcon /><SpeakerIcon /></TrayButton>
          <Clock>17:00<br />02-09-2022</Clock>
          <Notice>2</Notice>
        </Tray>
      </TaskBar>
    </Window>
  )
}

export default App;
